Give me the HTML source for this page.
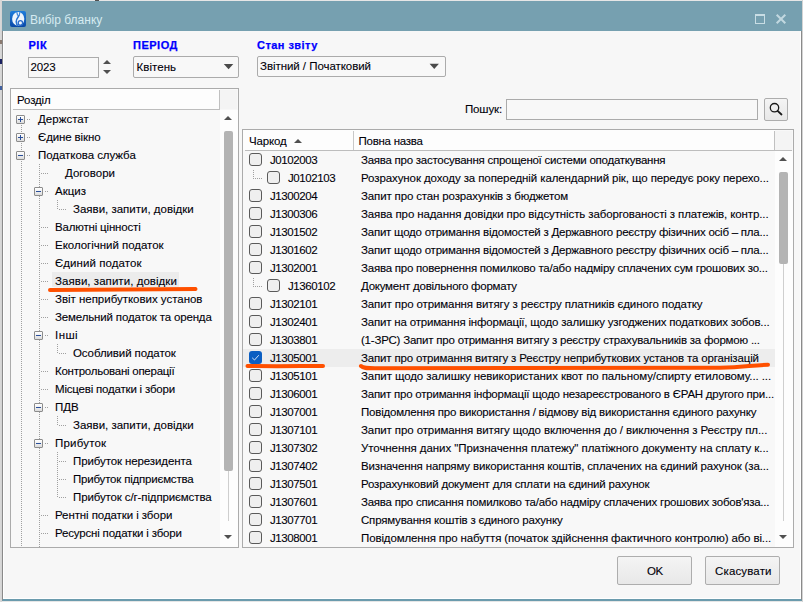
<!DOCTYPE html>
<html><head><meta charset="utf-8">
<style>
*{margin:0;padding:0;box-sizing:border-box}
html,body{width:803px;height:602px;overflow:hidden;background:#e4e4e4;font-family:"Liberation Sans",sans-serif;}
.a{position:absolute}
.t{position:absolute;white-space:nowrap;font-size:11.5px;line-height:18px;height:18px;color:#000008;letter-spacing:-0.15px;-webkit-text-stroke:0.1px #000008}
.lb{position:absolute;white-space:nowrap;font-size:11px;line-height:18px;font-weight:bold;color:#0000ff;-webkit-text-stroke:0.25px #0000ff}
.box{position:absolute;border:1px solid #ababab}
.tri-up{position:absolute;width:0;height:0;border-left:4px solid transparent;border-right:4px solid transparent;border-bottom:4px solid #505050}
.tri-dn{position:absolute;width:0;height:0;border-left:4px solid transparent;border-right:4px solid transparent;border-top:4px solid #505050}
.cb{position:absolute;width:13px;height:13px;border:1px solid #5a5a5a;border-radius:3px;background:#efefef}
.exp{position:absolute;width:9px;height:9px;border:1px solid #8c8c8c;border-radius:1px;background:linear-gradient(#ffffff,#dcdcdc)}
.vd{position:absolute;width:1px;background:repeating-linear-gradient(to bottom,#a0a0a0 0 1px,transparent 1px 2px)}
.hd{position:absolute;height:1px;background:repeating-linear-gradient(to right,#a0a0a0 0 1px,transparent 1px 2px)}
.btn{position:absolute;border:1px solid #adadad;border-radius:2px;background:linear-gradient(#f4f4f4,#e8e8e8)}
</style></head><body>
<div class="a" style="left:0;top:0;width:803px;height:602px;background:#e6e6e6"></div>
<div class="a" style="left:0;top:0;width:2px;height:602px;background:linear-gradient(to right,#dadada,#d2d2d2)"></div>
<div class="a" style="left:802px;top:0;width:1px;height:602px;background:#d4d4d4"></div>
<div class="a" style="left:95px;top:0;width:4px;height:1px;background:#505050"></div>
<div class="a" style="left:0;top:40px;width:2px;height:4px;background:#8a7a70"></div>
<div class="a" style="left:0;top:59px;width:2px;height:5px;background:#1a2060"></div>
<div class="a" style="left:0;top:86px;width:2px;height:4px;background:#4060a0"></div>
<div class="a" style="left:2px;top:1px;width:800px;height:30px;background:#76a0b0"></div>
<svg class="a" style="left:10px;top:11px" width="16" height="16" viewBox="0 0 16 16">
<defs><linearGradient id="ig" x1="0" y1="0" x2="0" y2="1"><stop offset="0" stop-color="#1e7ddb"/><stop offset="1" stop-color="#0a48a6"/></linearGradient></defs>
<rect x="0" y="0" width="16" height="16" rx="2" fill="url(#ig)"/>
<ellipse cx="8.2" cy="7.9" rx="6.1" ry="6.9" fill="#eef5fc"/>
<path d="M6.8 1.2 L7.6 4.6" stroke="#2f7fd8" stroke-width="1.1" fill="none"/>
<path d="M10 1.2 L9.1 4.6" stroke="#2f7fd8" stroke-width="1.1" fill="none"/>
<path d="M9.3 4.2 C8 6.2 6.1 8 6.2 10.8 C6.3 12.8 7 14.2 8.2 14.9" stroke="#2a74d2" stroke-width="1.5" fill="none"/>
<circle cx="10.4" cy="11.9" r="2.2" stroke="#2a6ccc" stroke-width="1.3" fill="none"/>
</svg>
<div class="a" style="left:30px;top:11px;font-size:12px;line-height:18px;color:#d5ebf1;white-space:nowrap">Вибір бланку</div>
<svg class="a" style="left:750px;top:9px" width="45" height="20" viewBox="0 0 45 20">
<rect x="5.5" y="5.5" width="9" height="9" fill="none" stroke="#c8dde4" stroke-width="1"/>
<rect x="5" y="5" width="10" height="2" fill="#c8dde4"/>
<path d="M26.7 5.7 L35.3 14.3 M35.3 5.7 L26.7 14.3" stroke="#c2d8e0" stroke-width="2"/>
</svg>
<div class="a" style="left:2px;top:31px;width:800px;height:570px;background:#f7f7f7;border-left:1px solid #8a8a8a;border-right:1px solid #8a8a8a;border-bottom:2px solid #6b9bad"></div>
<div class="a" style="left:3px;top:31px;width:1px;height:567px;background:#fff"></div>
<div class="a" style="left:800px;top:31px;width:1px;height:567px;background:#fff"></div>
<div class="a" style="left:3px;top:598px;width:798px;height:1px;background:#fff"></div>
<div class="lb" style="left:28.5px;top:35.8px;letter-spacing:0.5px">РІК</div>
<div class="lb" style="left:133px;top:35.8px;letter-spacing:0.5px">ПЕРІОД</div>
<div class="lb" style="left:257px;top:35.8px;letter-spacing:0.45px">Стан звіту</div>
<div class="box" style="left:28px;top:57px;width:71px;height:21px;background:#f8f8f8"></div>
<div class="t" style="left:30.5px;top:58px;">2023</div>
<div class="tri-up" style="left:103px;top:60px"></div>
<div class="tri-dn" style="left:103px;top:70px"></div>
<div class="box" style="left:133px;top:56px;width:106px;height:22px;border-radius:2px;background:#f8f8f8"></div>
<div class="t" style="left:136.5px;top:58px;letter-spacing:0.05px">Квітень</div>
<svg class="a" style="left:220px;top:60px" width="20" height="14"><polygon points="3.8,4 13.3,4 8.55,9.2" fill="#4a4a4a"/></svg>
<div class="box" style="left:257px;top:56px;width:189px;height:21px;border-radius:2px;background:#f8f8f8"></div>
<div class="t" style="left:260px;top:57px;letter-spacing:-0.05px">Звітний / Початковий</div>
<svg class="a" style="left:426px;top:60px" width="20" height="14"><polygon points="3.6,3.8 12.9,3.8 8.25,9.1" fill="#4a4a4a"/></svg>
<div class="box" style="left:10px;top:88px;width:229px;height:460px;background:#f8f8f8"></div>
<div class="a" style="left:11px;top:89px;width:209px;height:20px;background:#fdfdfd"></div>
<div class="a" style="left:13px;top:109px;width:207px;height:1px;background:#bdbdbd"></div>
<div class="a" style="left:219px;top:90px;width:1px;height:20px;background:#c0c0c0"></div>
<div class="a" style="left:220px;top:90px;width:17px;height:19px;background:#f4f4f4"></div>
<div class="a" style="left:220px;top:110px;width:18px;height:437px;background:#fdfdfd"></div>
<div class="t" style="left:17px;top:91px;">Розділ</div>
<div class="tri-up" style="left:224px;top:116px"></div>
<div class="a" style="left:224px;top:131px;width:9px;height:340px;background:#b4b4b4;border-radius:2px"></div>
<div class="a" style="left:228px;top:471px;width:1px;height:50px;background:#cfcfcf"></div>
<div class="tri-dn" style="left:224px;top:535px"></div>
<div class="vd" style="left:21px;top:125px;height:422px"></div>
<div class="vd" style="left:39px;top:164px;height:383px"></div>
<div class="vd" style="left:57px;top:200px;height:10px"></div>
<div class="vd" style="left:57px;top:344px;height:10px"></div>
<div class="vd" style="left:57px;top:416px;height:10px"></div>
<div class="vd" style="left:57px;top:452px;height:46px"></div>
<div class="a" style="left:52px;top:272px;width:127px;height:15px;background:#ececec"></div>
<div class="exp" style="left:16px;top:115px"></div>
<div class="a" style="left:18px;top:119px;width:5px;height:1px;background:#2a4f9a"></div>
<div class="a" style="left:20px;top:117px;width:1px;height:5px;background:#2a4f9a"></div>
<div class="hd" style="left:27px;top:119px;width:4px"></div>
<div class="t" style="left:38px;top:110px;letter-spacing:0.035px">Держстат</div>
<div class="exp" style="left:16px;top:133px"></div>
<div class="a" style="left:18px;top:137px;width:5px;height:1px;background:#2a4f9a"></div>
<div class="a" style="left:20px;top:135px;width:1px;height:5px;background:#2a4f9a"></div>
<div class="hd" style="left:27px;top:137px;width:4px"></div>
<div class="t" style="left:38px;top:128px;letter-spacing:-0.120px">Єдине вікно</div>
<div class="exp" style="left:16px;top:151px"></div>
<div class="a" style="left:18px;top:155px;width:5px;height:1px;background:#2a4f9a"></div>
<div class="hd" style="left:27px;top:155px;width:4px"></div>
<div class="t" style="left:38px;top:146px;letter-spacing:-0.050px">Податкова служба</div>
<div class="hd" style="left:41px;top:173px;width:7px"></div>
<div class="t" style="left:65px;top:164px;letter-spacing:0.021px">Договори</div>
<div class="exp" style="left:34px;top:187px"></div>
<div class="a" style="left:36px;top:191px;width:5px;height:1px;background:#2a4f9a"></div>
<div class="hd" style="left:45px;top:191px;width:4px"></div>
<div class="t" style="left:55px;top:182px;letter-spacing:-0.000px">Акциз</div>
<div class="hd" style="left:59px;top:209px;width:7px"></div>
<div class="t" style="left:73px;top:200px;letter-spacing:-0.007px">Заяви, запити, довідки</div>
<div class="hd" style="left:41px;top:227px;width:7px"></div>
<div class="t" style="left:55px;top:218px;letter-spacing:-0.176px">Валютні цінності</div>
<div class="hd" style="left:41px;top:245px;width:7px"></div>
<div class="t" style="left:55px;top:236px;letter-spacing:-0.028px">Екологічний податок</div>
<div class="hd" style="left:41px;top:263px;width:7px"></div>
<div class="t" style="left:55px;top:254px;letter-spacing:0.065px">Єдиний податок</div>
<div class="hd" style="left:41px;top:281px;width:7px"></div>
<div class="t" style="left:55px;top:272px;letter-spacing:0.050px">Заяви, запити, довідки</div>
<div class="hd" style="left:41px;top:299px;width:7px"></div>
<div class="t" style="left:55px;top:290px;letter-spacing:-0.022px">Звіт неприбуткових установ</div>
<div class="hd" style="left:41px;top:317px;width:7px"></div>
<div class="t" style="left:55px;top:308px;letter-spacing:-0.150px">Земельний податок та оренда</div>
<div class="exp" style="left:34px;top:331px"></div>
<div class="a" style="left:36px;top:335px;width:5px;height:1px;background:#2a4f9a"></div>
<div class="hd" style="left:45px;top:335px;width:4px"></div>
<div class="t" style="left:55px;top:326px;letter-spacing:0.450px">Інші</div>
<div class="hd" style="left:59px;top:353px;width:7px"></div>
<div class="t" style="left:73px;top:344px;letter-spacing:-0.100px">Особливий податок</div>
<div class="hd" style="left:41px;top:371px;width:7px"></div>
<div class="t" style="left:55px;top:362px;letter-spacing:-0.255px">Контрольовані операції</div>
<div class="hd" style="left:41px;top:389px;width:7px"></div>
<div class="t" style="left:55px;top:380px;letter-spacing:-0.196px">Місцеві податки і збори</div>
<div class="exp" style="left:34px;top:403px"></div>
<div class="a" style="left:36px;top:407px;width:5px;height:1px;background:#2a4f9a"></div>
<div class="hd" style="left:45px;top:407px;width:4px"></div>
<div class="t" style="left:55px;top:398px;letter-spacing:-0.050px">ПДВ</div>
<div class="hd" style="left:59px;top:425px;width:7px"></div>
<div class="t" style="left:73px;top:416px;letter-spacing:-0.007px">Заяви, запити, довідки</div>
<div class="exp" style="left:34px;top:439px"></div>
<div class="a" style="left:36px;top:443px;width:5px;height:1px;background:#2a4f9a"></div>
<div class="hd" style="left:45px;top:443px;width:4px"></div>
<div class="t" style="left:55px;top:434px;letter-spacing:0.193px">Прибуток</div>
<div class="hd" style="left:59px;top:461px;width:7px"></div>
<div class="t" style="left:73px;top:452px;letter-spacing:-0.108px">Прибуток нерезидента</div>
<div class="hd" style="left:59px;top:479px;width:7px"></div>
<div class="t" style="left:73px;top:470px;letter-spacing:-0.200px">Прибуток підприємства</div>
<div class="hd" style="left:59px;top:497px;width:7px"></div>
<div class="t" style="left:73px;top:488px;letter-spacing:-0.124px">Прибуток с/г-підприємства</div>
<div class="hd" style="left:41px;top:515px;width:7px"></div>
<div class="t" style="left:55px;top:506px;letter-spacing:-0.083px">Рентні податки і збори</div>
<div class="hd" style="left:41px;top:533px;width:7px"></div>
<div class="t" style="left:55px;top:524px;letter-spacing:-0.176px">Ресурсні податки і збори</div>
<div class="t" style="left:465px;top:100px;">Пошук:</div>
<div class="box" style="left:506px;top:99px;width:252px;height:21px;background:#f8f8f8"></div>
<div class="btn" style="left:764px;top:98px;width:24px;height:23px"></div>
<svg class="a" style="left:764px;top:98px" width="24" height="23" viewBox="0 0 24 23">
<circle cx="10.5" cy="9.7" r="4.2" fill="none" stroke="#1a1a1a" stroke-width="1.3"/>
<path d="M13.6 12.8 L17.5 16.5" stroke="#1a1a1a" stroke-width="1.8" stroke-linecap="round"/>
</svg>
<div class="box" style="left:242px;top:129px;width:552px;height:419px;background:#f8f8f8"></div>
<div class="a" style="left:243px;top:130px;width:532px;height:20px;background:#fdfdfd"></div>
<div class="a" style="left:245px;top:150px;width:547px;height:1px;background:#bdbdbd"></div>
<div class="a" style="left:353px;top:131px;width:1px;height:19px;background:#c8c8c8"></div>
<div class="a" style="left:774px;top:131px;width:1px;height:19px;background:#c0c0c0"></div>
<div class="a" style="left:775px;top:131px;width:17px;height:19px;background:#f4f4f4"></div>
<div class="a" style="left:775px;top:151px;width:18px;height:396px;background:#fdfdfd"></div>
<div class="t" style="left:249px;top:132px;">Чаркод</div>
<div class="tri-up" style="left:294px;top:139px"></div>
<div class="t" style="left:358.5px;top:132px;letter-spacing:-0.25px">Повна назва</div>
<div class="tri-up" style="left:779px;top:157px"></div>
<div class="a" style="left:779px;top:172px;width:9px;height:92px;background:#b4b4b4;border-radius:2px"></div>
<div class="a" style="left:783px;top:264px;width:1px;height:257px;background:#cfcfcf"></div>
<div class="tri-dn" style="left:779px;top:535px"></div>
<div class="a" style="left:243px;top:349px;width:532px;height:18px;background:#ededed"></div>
<div class="cb" style="left:249px;top:153px"></div>
<div class="t" style="left:270px;top:151px;letter-spacing:-0.42px">J0102003</div>
<div class="t" style="left:361px;top:151px;letter-spacing:-0.256px">Заява про застосування спрощеної системи оподаткування</div>
<div class="vd" style="left:253px;top:170px;height:9px"></div>
<div class="hd" style="left:255px;top:178px;width:7px"></div>
<div class="cb" style="left:267px;top:171px"></div>
<div class="t" style="left:288px;top:169px;letter-spacing:-0.42px">J0102103</div>
<div class="t" style="left:361px;top:169px;letter-spacing:-0.095px">Розрахунок доходу за попередній календарний рік, що передує року перехо...</div>
<div class="cb" style="left:249px;top:189px"></div>
<div class="t" style="left:270px;top:187px;letter-spacing:-0.42px">J1300204</div>
<div class="t" style="left:361px;top:187px;letter-spacing:-0.144px">Запит про стан розрахунків з бюджетом</div>
<div class="cb" style="left:249px;top:207px"></div>
<div class="t" style="left:270px;top:205px;letter-spacing:-0.42px">J1300306</div>
<div class="t" style="left:361px;top:205px;letter-spacing:-0.111px">Заява про надання довідки про відсутність заборгованості з платежів, контр...</div>
<div class="cb" style="left:249px;top:225px"></div>
<div class="t" style="left:270px;top:223px;letter-spacing:-0.42px">J1301502</div>
<div class="t" style="left:361px;top:223px;letter-spacing:-0.231px">Запит щодо отримання відомостей з Державного реєстру фізичних осіб – пла...</div>
<div class="cb" style="left:249px;top:243px"></div>
<div class="t" style="left:270px;top:241px;letter-spacing:-0.42px">J1301602</div>
<div class="t" style="left:361px;top:241px;letter-spacing:-0.231px">Запит щодо отримання відомостей з Державного реєстру фізичних осіб – пла...</div>
<div class="cb" style="left:249px;top:261px"></div>
<div class="t" style="left:270px;top:259px;letter-spacing:-0.42px">J1302001</div>
<div class="t" style="left:361px;top:259px;letter-spacing:-0.226px">Заява про повернення помилково та/або надміру сплачених сум грошових зо...</div>
<div class="vd" style="left:253px;top:278px;height:9px"></div>
<div class="hd" style="left:255px;top:286px;width:7px"></div>
<div class="cb" style="left:267px;top:279px"></div>
<div class="t" style="left:288px;top:277px;letter-spacing:-0.42px">J1360102</div>
<div class="t" style="left:361px;top:277px;letter-spacing:-0.243px">Документ довільного формату</div>
<div class="cb" style="left:249px;top:297px"></div>
<div class="t" style="left:270px;top:295px;letter-spacing:-0.42px">J1302101</div>
<div class="t" style="left:361px;top:295px;letter-spacing:-0.114px">Запит про отримання витягу з реєстру платників єдиного податку</div>
<div class="cb" style="left:249px;top:315px"></div>
<div class="t" style="left:270px;top:313px;letter-spacing:-0.42px">J1302401</div>
<div class="t" style="left:361px;top:313px;letter-spacing:-0.191px">Запит на отримання інформації, щодо залишку узгоджених податкових зобов...</div>
<div class="cb" style="left:249px;top:333px"></div>
<div class="t" style="left:270px;top:331px;letter-spacing:-0.42px">J1303801</div>
<div class="t" style="left:361px;top:331px;letter-spacing:-0.213px">(1-ЗРС) Запит про отримання витягу з реєстру страхувальників за формою ...</div>
<div class="a" style="left:249px;top:351px;width:13px;height:13px;border-radius:3px;background:#0a5ec2"></div>
<svg class="a" style="left:249px;top:351px" width="13" height="13" viewBox="0 0 13 13"><path d="M3.2 6.8 L5.5 9 L9.8 4.2" stroke="#e8f0fa" stroke-width="0.9" fill="none"/></svg>
<div class="t" style="left:270px;top:349px;letter-spacing:-0.42px">J1305001</div>
<div class="t" style="left:361px;top:349px;letter-spacing:-0.164px">Запит про отримання витягу з Реєстру неприбуткових установ та організацій</div>
<div class="cb" style="left:249px;top:369px"></div>
<div class="t" style="left:270px;top:367px;letter-spacing:-0.42px">J1305101</div>
<div class="t" style="left:361px;top:367px;letter-spacing:-0.090px">Запит щодо залишку невикористаних квот по пальному/спирту етиловому... ...</div>
<div class="cb" style="left:249px;top:387px"></div>
<div class="t" style="left:270px;top:385px;letter-spacing:-0.42px">J1306001</div>
<div class="t" style="left:361px;top:385px;letter-spacing:-0.232px">Запит про отримання інформації щодо незареєстрованого в ЄРАН другого при...</div>
<div class="cb" style="left:249px;top:405px"></div>
<div class="t" style="left:270px;top:403px;letter-spacing:-0.42px">J1307001</div>
<div class="t" style="left:361px;top:403px;letter-spacing:-0.215px">Повідомлення про використання / відмову від використання єдиного рахунку</div>
<div class="cb" style="left:249px;top:423px"></div>
<div class="t" style="left:270px;top:421px;letter-spacing:-0.42px">J1307101</div>
<div class="t" style="left:361px;top:421px;letter-spacing:-0.103px">Запит про отримання витягу щодо включення до / виключення з Реєстру пл...</div>
<div class="cb" style="left:249px;top:441px"></div>
<div class="t" style="left:270px;top:439px;letter-spacing:-0.42px">J1307302</div>
<div class="t" style="left:361px;top:439px;letter-spacing:-0.067px">Уточнення даних "Призначення платежу" платіжного документу на сплату к...</div>
<div class="cb" style="left:249px;top:459px"></div>
<div class="t" style="left:270px;top:457px;letter-spacing:-0.42px">J1307402</div>
<div class="t" style="left:361px;top:457px;letter-spacing:-0.150px">Визначення напряму використання коштів, сплачених на єдиний рахунок (за...</div>
<div class="cb" style="left:249px;top:477px"></div>
<div class="t" style="left:270px;top:475px;letter-spacing:-0.42px">J1307501</div>
<div class="t" style="left:361px;top:475px;letter-spacing:-0.190px">Розрахунковий документ для сплати на єдиний рахунок</div>
<div class="cb" style="left:249px;top:495px"></div>
<div class="t" style="left:270px;top:493px;letter-spacing:-0.42px">J1307601</div>
<div class="t" style="left:361px;top:493px;letter-spacing:-0.245px">Заява про списання помилково та/або надміру сплачених грошових зобов'яза...</div>
<div class="cb" style="left:249px;top:513px"></div>
<div class="t" style="left:270px;top:511px;letter-spacing:-0.42px">J1307701</div>
<div class="t" style="left:361px;top:511px;letter-spacing:-0.195px">Спрямування коштів з єдиного рахунку</div>
<div class="cb" style="left:249px;top:531px"></div>
<div class="t" style="left:270px;top:529px;letter-spacing:-0.42px">J1308001</div>
<div class="t" style="left:361px;top:529px;letter-spacing:-0.131px">Повідомлення про набуття (початок здійснення фактичного контролю) або ві...</div>
<div class="btn" style="left:617px;top:556px;width:75px;height:29px"></div>
<div class="t" style="left:647px;top:562px;letter-spacing:-0.5px">OK</div>
<div class="btn" style="left:705px;top:556px;width:75px;height:29px"></div>
<div class="t" style="left:715px;top:562px;letter-spacing:0.15px">Скасувати</div>
<svg class="a" style="left:0;top:0" width="803" height="602" viewBox="0 0 803 602">
<path d="M50 290 C100 289.5 150 289 195.5 289" stroke="#ff5000" stroke-width="4" stroke-linecap="round" fill="none"/>
<path d="M247.5 366 C280 366.5 300 366 323 366" stroke="#ff5000" stroke-width="4" stroke-linecap="round" fill="none"/>
<path d="M361 366 C363 368 366 368.3 375 368.3 L720 367.8 C745 367.5 752 364.8 768 364.8" stroke="#ff5000" stroke-width="4" stroke-linecap="round" fill="none"/>
</svg>
</body></html>
